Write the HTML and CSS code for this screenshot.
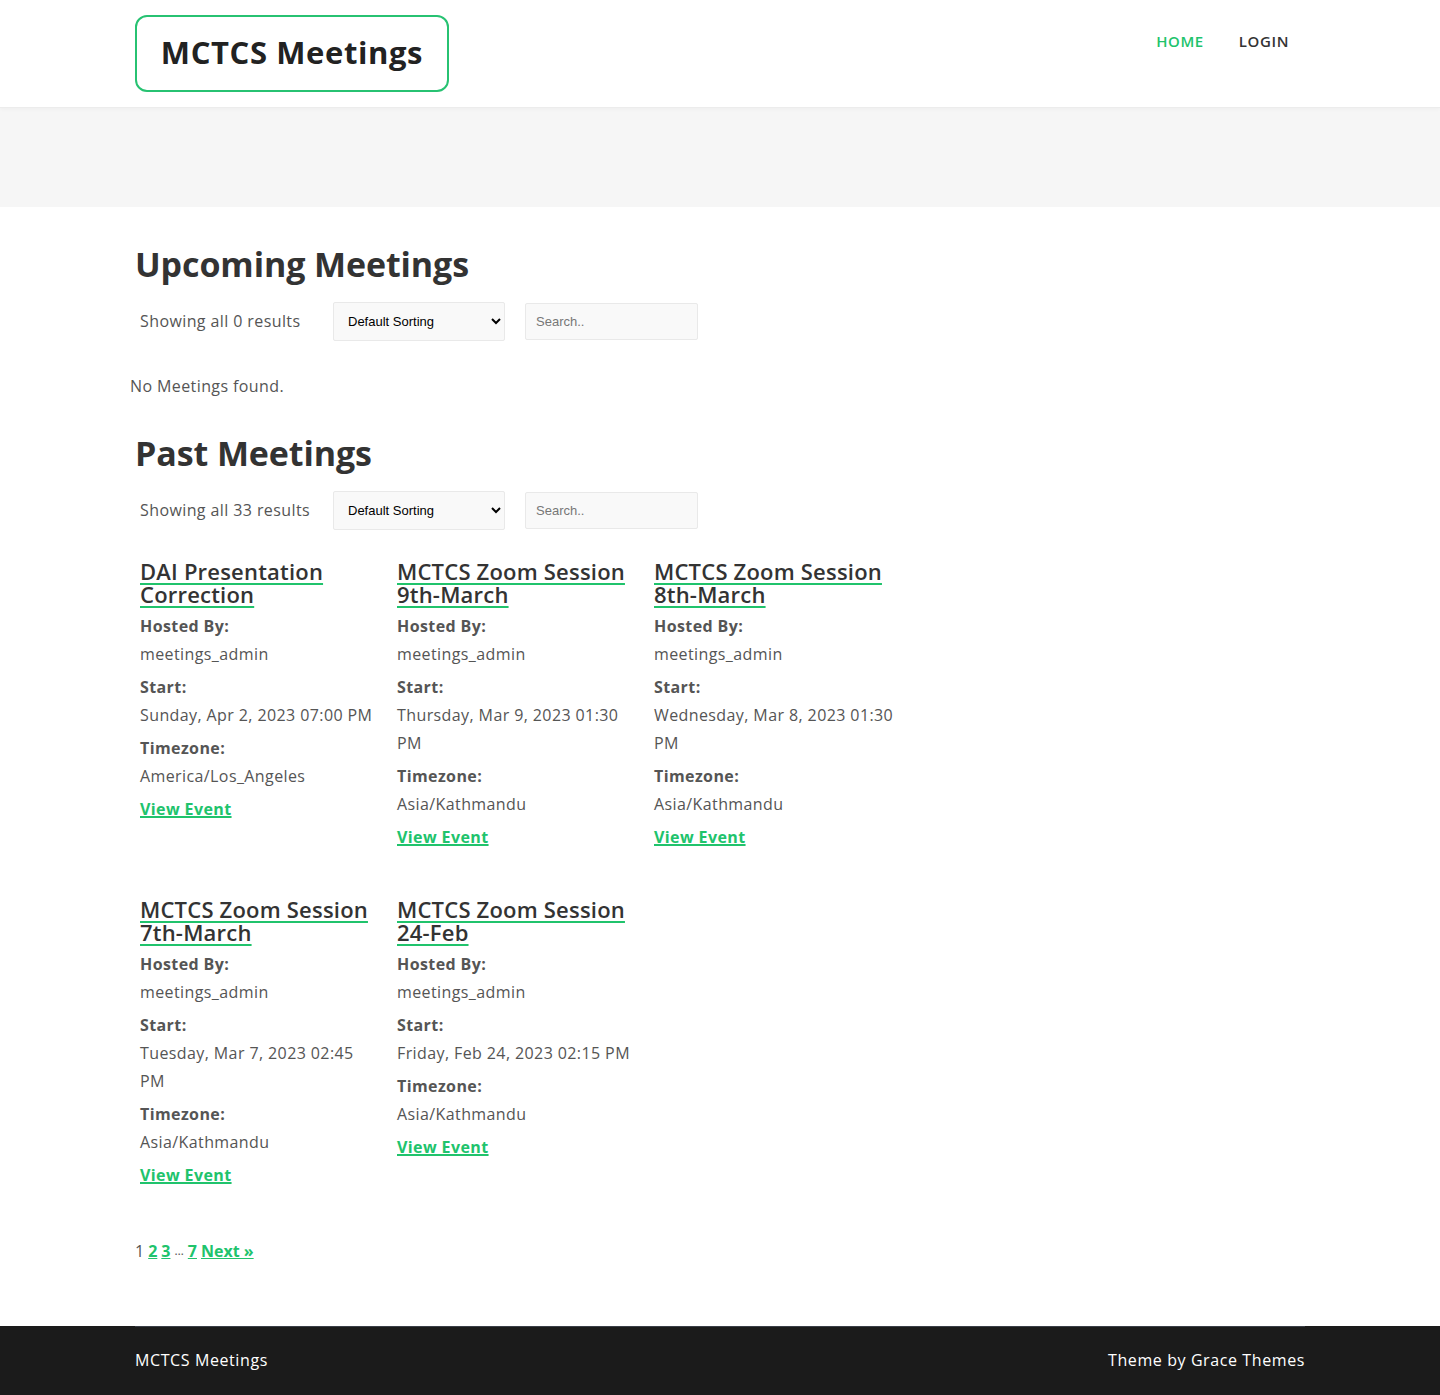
FILE: index.html
```html
<!DOCTYPE html>
<html lang="en">
<head>
<meta charset="utf-8">
<title>MCTCS Meetings</title>
<link rel="stylesheet" href="styles.css">
</head>
<body>
<header class="site-header">
  <div class="container header-inner">
    <a class="logo" href="#">MCTCS Meetings</a>
    <nav class="main-nav">
      <a class="nav-link active" href="#">HOME</a>
      <a class="nav-link" href="#">LOGIN</a>
    </nav>
  </div>
</header>
<div class="page-band"></div>
<main class="container content">
  <section class="meetings">
    <h2 class="section-title">Upcoming Meetings</h2>
    <div class="controls">
      <span class="result-count">Showing all 0 results</span>
      <select class="sort-select"><option>Default Sorting</option></select>
      <input class="search-input" type="text" placeholder="Search..">
    </div>
    <p class="empty">No Meetings found.</p>
  </section>
  <section class="meetings">
    <h2 class="section-title">Past Meetings</h2>
    <div class="controls">
      <span class="result-count">Showing all 33 results</span>
      <select class="sort-select"><option>Default Sorting</option></select>
      <input class="search-input" type="text" placeholder="Search..">
    </div>
    <div class="grid">
      <article class="card">
        <h3 class="card-title"><a href="#">DAI Presentation Correction</a></h3>
        <div class="field"><strong>Hosted By:</strong><span>meetings_admin</span></div>
        <div class="field"><strong>Start:</strong><span>Sunday, Apr 2, 2023 07:00 PM</span></div>
        <div class="field"><strong>Timezone:</strong><span>America/Los_Angeles</span></div>
        <a class="view" href="#">View Event</a>
      </article>
      <article class="card">
        <h3 class="card-title"><a href="#">MCTCS Zoom Session 9th-March</a></h3>
        <div class="field"><strong>Hosted By:</strong><span>meetings_admin</span></div>
        <div class="field"><strong>Start:</strong><span>Thursday, Mar 9, 2023 01:30 PM</span></div>
        <div class="field"><strong>Timezone:</strong><span>Asia/Kathmandu</span></div>
        <a class="view" href="#">View Event</a>
      </article>
      <article class="card">
        <h3 class="card-title"><a href="#">MCTCS Zoom Session 8th-March</a></h3>
        <div class="field"><strong>Hosted By:</strong><span>meetings_admin</span></div>
        <div class="field"><strong>Start:</strong><span>Wednesday, Mar 8, 2023 01:30 PM</span></div>
        <div class="field"><strong>Timezone:</strong><span>Asia/Kathmandu</span></div>
        <a class="view" href="#">View Event</a>
      </article>
      <article class="card">
        <h3 class="card-title"><a href="#">MCTCS Zoom Session 7th-March</a></h3>
        <div class="field"><strong>Hosted By:</strong><span>meetings_admin</span></div>
        <div class="field"><strong>Start:</strong><span>Tuesday, Mar 7, 2023 02:45 PM</span></div>
        <div class="field"><strong>Timezone:</strong><span>Asia/Kathmandu</span></div>
        <a class="view" href="#">View Event</a>
      </article>
      <article class="card">
        <h3 class="card-title"><a href="#">MCTCS Zoom Session 24-Feb</a></h3>
        <div class="field"><strong>Hosted By:</strong><span>meetings_admin</span></div>
        <div class="field"><strong>Start:</strong><span>Friday, Feb 24, 2023 02:15 PM</span></div>
        <div class="field"><strong>Timezone:</strong><span>Asia/Kathmandu</span></div>
        <a class="view" href="#">View Event</a>
      </article>
    </div>
    <div class="pagination">
      <span class="current">1</span>
      <a href="#">2</a>
      <a href="#">3</a>
      <span class="dots">…</span>
      <a href="#">7</a>
      <a href="#">Next »</a>
    </div>
  </section>
</main>
<footer class="site-footer">
  <div class="container footer-inner">
    <span>MCTCS Meetings</span>
    <span>Theme by Grace Themes</span>
  </div>
</footer>
</body>
</html>
```

FILE: styles.css
```css
* { box-sizing: border-box; }
html, body { margin: 0; padding: 0; }
body {
  font-family: "Open Sans", "DejaVu Sans", sans-serif;
  font-size: 16px;
  letter-spacing: 0.4px;
  line-height: 28px;
  color: #555;
  background: #fff;
}
a { color: inherit; }
.container {
  width: 1170px;
  margin: 0 auto;
}
.site-header {
  background: #fff;
  height: 108px;
  border-bottom: 1px solid #ececec;
  box-shadow: 0 1px 4px rgba(0,0,0,0.04);
  position: relative;
  z-index: 1;
}
.header-inner {
  display: flex;
  justify-content: space-between;
  align-items: flex-start;
  padding-top: 15px;
}
.logo {
  display: block;
  width: 314px;
  height: 77px;
  border: 2px solid #27c272;
  border-radius: 12px;
  font-size: 31px;
  font-weight: 700;
  color: #222;
  text-decoration: none;
  line-height: 70px;
  text-align: center;
  letter-spacing: 0.6px;
}
.main-nav {
  display: flex;
  gap: 35px;
  padding-top: 11px;
  padding-right: 16px;
}
.nav-link {
  font-size: 15px;
  font-weight: 600;
  color: #333;
  text-decoration: none;
  line-height: 30px;
  letter-spacing: 0.6px;
}
.nav-link.active { color: #20c36c; }
.page-band {
  height: 99px;
  background: #f6f6f6;
}
.content {
  padding-top: 36px;
  padding-bottom: 63px;
}
.section-title {
  font-size: 34px;
  font-weight: 700;
  color: #333;
  margin: 0;
  line-height: 42px;
  letter-spacing: -0.1px;
}
.controls {
  display: flex;
  align-items: center;
  padding-left: 5px;
  margin-top: 16px;
  height: 40px;
}
.result-count {
  width: 193px;
  color: #555;
}
.sort-select {
  width: 172px;
  height: 39px;
  background: #f9f9f9;
  border: 1px solid #e9e9e9;
  border-radius: 2px;
  font-family: "Liberation Sans", Arial, sans-serif;
  font-size: 13px;
  color: #000;
  padding: 0 10px;
}
.search-input {
  margin-left: 20px;
  width: 173px;
  height: 37px;
  background: #f9f9f9;
  border: 1px solid #e9e9e9;
  border-radius: 2px;
  font-family: "Liberation Sans", Arial, sans-serif;
  font-size: 13px;
  padding: 0 10px;
}
.search-input::placeholder { color: #777; }
.empty {
  margin: 31px 0 0 -5px;
}
.meetings + .meetings { margin-top: 32px; }
.grid {
  display: grid;
  grid-template-columns: 257px 257px 270px;
  row-gap: 47px;
  padding-left: 5px;
  margin-top: 30px;
}
.card { padding-right: 20px; }
.card-title {
  margin: 0 0 6px;
  font-size: 22px;
  font-weight: 600;
  line-height: 23px;
  letter-spacing: 0.2px;
  color: #333;
}
.card-title a {
  color: #333;
  text-decoration: underline;
  text-decoration-color: #20c36c;
  text-decoration-thickness: 2px;
  text-underline-offset: 3px;
}
.field {
  display: flex;
  flex-direction: column;
  margin-bottom: 5px;
}
.field strong {
  font-weight: 700;
  color: #555;
}
.view {
  font-weight: 700;
  color: #20c36c;
  text-decoration: underline;
  text-decoration-thickness: 2px;
}
.pagination {
  margin-top: 50px;
  display: flex;
  gap: 4px;
  font-size: 16px;
  line-height: 24px;
  letter-spacing: 0;
}
.pagination a {
  color: #20c36c;
  font-weight: 700;
  text-decoration: underline;
}
.pagination .dots { font-size: 12px; }
.site-footer {
  background: #1b1b1b;
  height: 69px;
}
.footer-inner {
  display: flex;
  justify-content: space-between;
  border-top: 1px solid #3a3f47;
  color: #fff;
  padding-top: 19px;
  letter-spacing: 0.6px;
}
```
